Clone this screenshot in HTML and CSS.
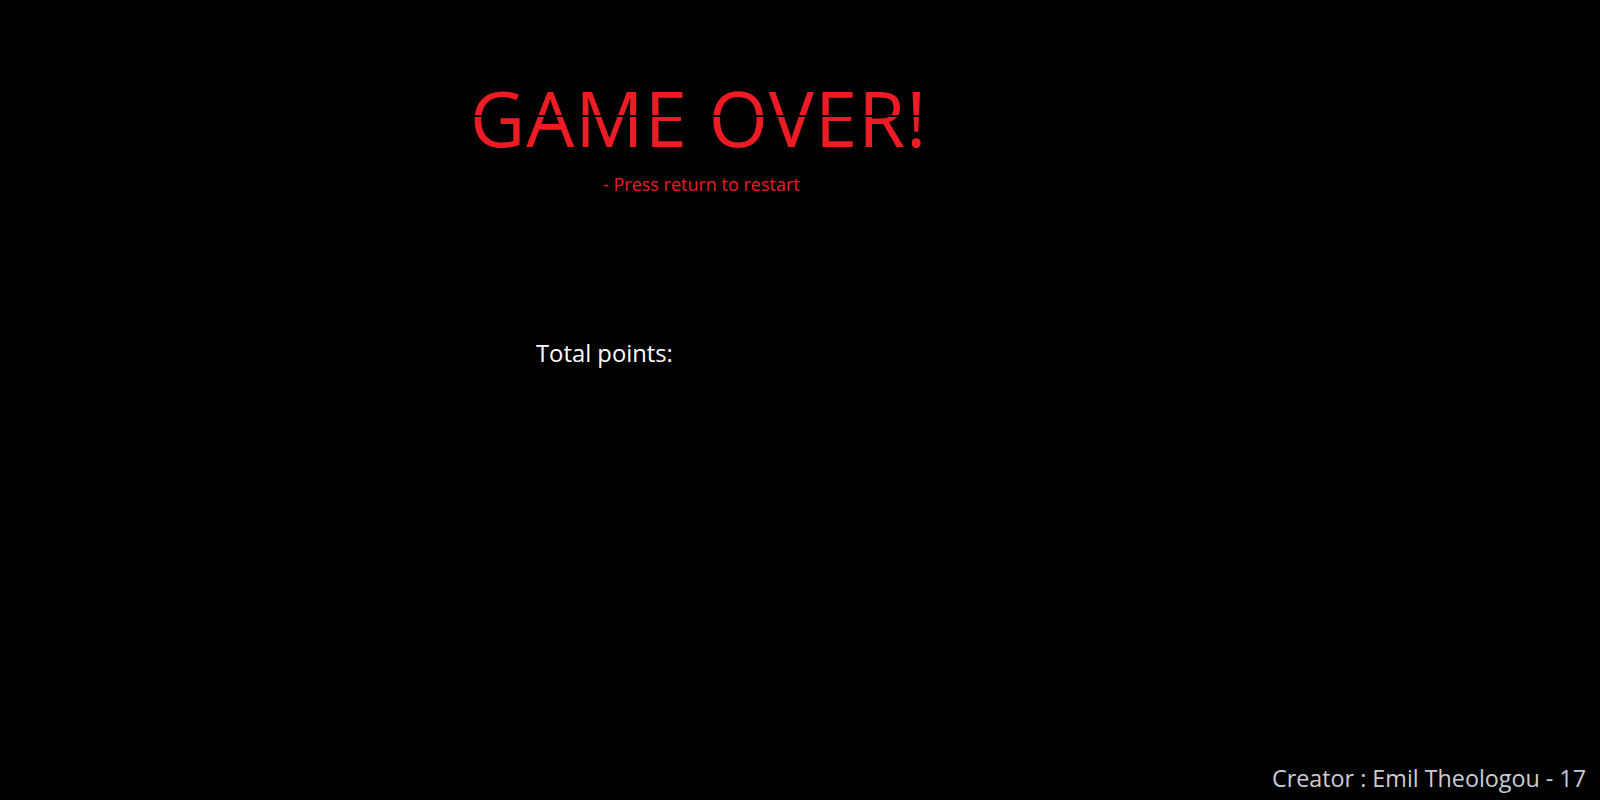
FILE: index.html
```html
<!DOCTYPE html>
<html>
<head>
<meta charset="utf-8">
<link rel="stylesheet" href="styles.css">
</head>
<body>
<main class="screen">
  <section class="over">
    <h1 class="title">GAME OVER!</h1>
    <p class="hint">- Press return to restart</p>
  </section>
  <p class="points">Total points:</p>
  <footer class="credit">Creator : Emil Theologou - 17</footer>
</main>
</body>
</html>
```
FILE: styles.css
```css
html, body {
  margin: 0;
  padding: 0;
  background: #000;
}
.screen {
  width: 1600px;
  height: 800px;
  display: flex;
  flex-direction: column;
  font-family: "Open Sans", "Noto Sans", sans-serif;
  box-sizing: border-box;
}
.over {
  display: flex;
  flex-direction: column;
  padding-left: 470px;
  padding-top: 78px;
}
.title {
  position: relative;
  margin: 0;
  font-weight: 400;
  font-size: 76px;
  line-height: 80px;
  color: #ed1c24;
  letter-spacing: 1px;
  align-self: flex-start;
}
.title::after {
  content: "";
  position: absolute;
  left: 0;
  right: 0;
  top: 37px;
  height: 2px;
  background: #000;
}
.hint {
  margin: 14px 0 0 133px;
  font-size: 18px;
  line-height: 24px;
  color: #ed1c24;
}
.points {
  margin: 142px 0 0 536px;
  font-size: 23.8px;
  line-height: 30px;
  color: #fff;
}
.credit {
  margin-top: auto;
  align-self: flex-end;
  margin-right: 14px;
  margin-bottom: 7px;
  font-size: 23.3px;
  line-height: 30px;
  color: #c8cdd3;
}
```
